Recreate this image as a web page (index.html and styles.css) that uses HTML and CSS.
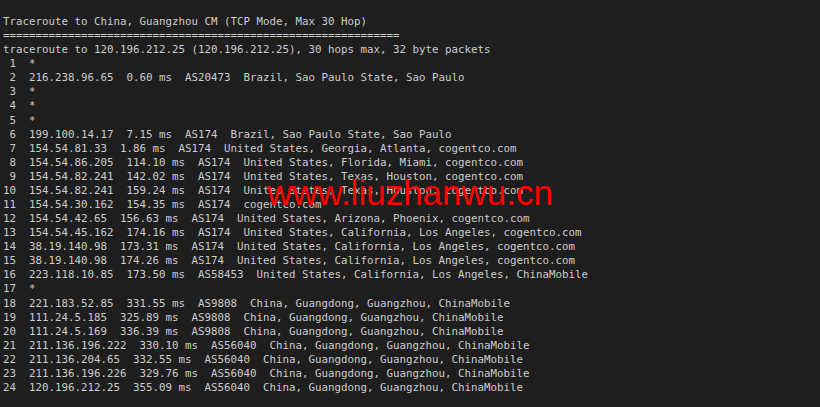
FILE: index.html
```html
<!DOCTYPE html>
<html>
<head>
<meta charset="utf-8">
<link rel="stylesheet" href="styles.css">
</head>
<body>
<div class="term">
<pre class="out">Traceroute to China, Guangzhou CM (TCP Mode, Max 30 Hop)
=============================================================
traceroute to 120.196.212.25 (120.196.212.25), 30 hops max, 32 byte packets
 1  *
 2  216.238.96.65  0.60 ms  AS20473  Brazil, Sao Paulo State, Sao Paulo
 3  *
 4  *
 5  *
 6  199.100.14.17  7.15 ms  AS174  Brazil, Sao Paulo State, Sao Paulo
 7  154.54.81.33  1.86 ms  AS174  United States, Georgia, Atlanta, cogentco.com
 8  154.54.86.205  114.10 ms  AS174  United States, Florida, Miami, cogentco.com
 9  154.54.82.241  142.02 ms  AS174  United States, Texas, Houston, cogentco.com
10  154.54.82.241  159.24 ms  AS174  United States, Texas, Houston, cogentco.com
11  154.54.30.162  154.35 ms  AS174  cogentco.com
12  154.54.42.65  156.63 ms  AS174  United States, Arizona, Phoenix, cogentco.com
13  154.54.45.162  174.16 ms  AS174  United States, California, Los Angeles, cogentco.com
14  38.19.140.98  173.31 ms  AS174  United States, California, Los Angeles, cogentco.com
15  38.19.140.98  174.26 ms  AS174  United States, California, Los Angeles, cogentco.com
16  223.118.10.85  173.50 ms  AS58453  United States, California, Los Angeles, ChinaMobile
17  *
18  221.183.52.85  331.55 ms  AS9808  China, Guangdong, Guangzhou, ChinaMobile
19  111.24.5.185  325.89 ms  AS9808  China, Guangdong, Guangzhou, ChinaMobile
20  111.24.5.169  336.39 ms  AS9808  China, Guangdong, Guangzhou, ChinaMobile
21  211.136.196.222  330.10 ms  AS56040  China, Guangdong, Guangzhou, ChinaMobile
22  211.136.204.65  332.55 ms  AS56040  China, Guangdong, Guangzhou, ChinaMobile
23  211.136.196.226  329.76 ms  AS56040  China, Guangdong, Guangzhou, ChinaMobile
24  120.196.212.25  355.09 ms  AS56040  China, Guangdong, Guangzhou, ChinaMobile</pre>
<div class="watermark">www.liuzhanwu.cn</div>
</div>
</body>
</html>
```
FILE: styles.css
```css
html, body {
  margin: 0;
  padding: 0;
  background: #1e1e1e;
  width: 820px;
  height: 407px;
  overflow: hidden;
}
.term {
  position: relative;
  width: 820px;
  height: 407px;
  padding: 15px 0 0 3px;
  box-sizing: border-box;
}
.out {
  margin: 0;
  font-family: "DejaVu Sans Mono", "Liberation Mono", monospace;
  font-size: 10.8px;
  line-height: 14.08px;
  color: #cccccc;
}
.watermark {
  position: absolute;
  left: 267px;
  top: 173px;
  font-family: "Liberation Sans", Arial, sans-serif;
  font-size: 35px;
  line-height: 40px;
  color: #ff0000;
  white-space: nowrap;
}
```
